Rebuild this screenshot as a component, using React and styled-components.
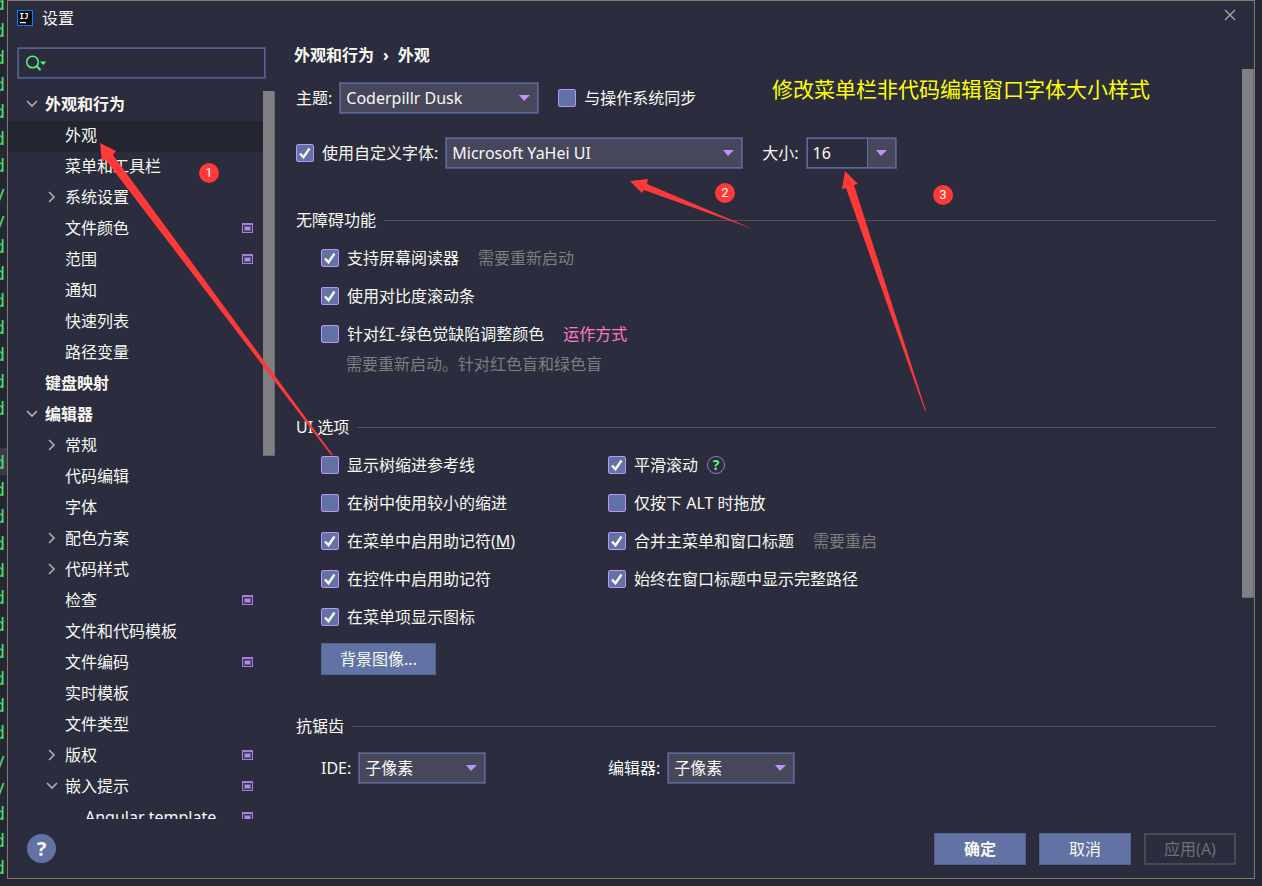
import React, { useState } from "react";
import styled, { createGlobalStyle } from "styled-components";

const GlobalStyle = createGlobalStyle`
  * {
    box-sizing: border-box;
  }
  body {
    margin: 0;
    background: #252735;
  }
  body, button, input, select {
    font-family: "Noto Sans", "Noto Sans CJK SC", sans-serif;
    font-size: 16px;
    line-height: 24px;
    color: #f8f8f2;
  }
`;

const Page = styled.div`
  position: relative;
  display: flex;
  height: 100vh;
  overflow: hidden;
`;

/* editor behind the dialog */
const Gutter = styled.div`
  width: 7px;
  flex-shrink: 0;
  overflow: hidden;
  margin-top: -11px;
`;
const CodeLine = styled.div`
  display: flex;
  justify-content: flex-end;
  height: 27px;
  padding-right: 2px;
  font-family: "DejaVu Sans Mono", monospace;
  font-size: 18px;
  line-height: 29px;
  color: #50fa7b;
  opacity: 0.85;
  background: ${(props) => (props.$current ? "#3d3f50" : "transparent")};
`;

const Dialog = styled.div`
  flex: 1;
  min-width: 0;
  display: flex;
  flex-direction: column;
  margin: 0 7px 7px 0;
  background: #2b2d3e;
  border: 1px solid #837b68;
`;
const TitleBar = styled.header`
  display: flex;
  align-items: center;
  height: 36px;
  padding: 0 18px 2px 9px;
  flex-shrink: 0;
`;
const Title = styled.span`
  flex: 1;
  padding-left: 9px;
`;
const CloseButton = styled.button`
  display: flex;
  padding: 0;
  margin-bottom: 6px;
  border: none;
  background: none;
`;
const Body = styled.div`
  flex: 1;
  min-height: 0;
  display: flex;
`;

const Sidebar = styled.aside`
  width: 267px;
  flex-shrink: 0;
  display: flex;
  flex-direction: column;
  padding-top: 10px;
`;
const Search = styled.label`
  display: flex;
  align-items: center;
  height: 32px;
  margin: 0 9px 11px;
  padding: 0 8px;
  border: 1px solid #465079;
  box-shadow: inset 0 0 0 1px #55618f;
  flex-shrink: 0;
`;
const SearchInput = styled.input`
  flex: 1;
  min-width: 0;
  border: none;
  outline: none;
  background: none;
`;
const TreeArea = styled.div`
  flex: 1;
  min-height: 0;
  display: flex;
`;
const Tree = styled.ul`
  flex: 1;
  margin: 0;
  padding: 0;
  list-style: none;
  overflow: hidden;
`;
const TreeRow = styled.button`
  display: flex;
  align-items: center;
  width: 100%;
  height: 31px;
  padding: 0 10px 3px ${(props) => 16 + props.$level * 20}px;
  border: none;
  text-align: left;
  font-weight: ${(props) => (props.$level === 0 ? 700 : 400)};
  background: ${(props) => (props.$selected ? "#232530" : "none")};
`;
const Arrow = styled.span`
  display: flex;
  width: 21px;
  flex-shrink: 0;
`;
const RowLabel = styled.span`
  flex: 1;
  white-space: nowrap;
`;
const ScrollThumb = styled.div`
  width: 12px;
  height: ${(props) => props.$size};
  flex-shrink: 0;
  margin-top: ${(props) => props.$top};
  background: #808083;
  border: 1px solid #6a6a70;
  border-width: 0 1px 1px 0;
`;

const Content = styled.main`
  flex: 1;
  min-width: 0;
  display: flex;
  flex-direction: column;
  padding-top: 6px;
`;
const Breadcrumb = styled.nav`
  display: flex;
  gap: 9px;
  padding-left: 19px;
  font-weight: 700;
`;
const PaneArea = styled.div`
  flex: 1;
  min-height: 0;
  display: flex;
`;
const Pane = styled.div`
  flex: 1;
  min-width: 0;
  padding: 15px 26px 0 21px;
  overflow: hidden;
`;
const FormRows = styled.div`
  display: flex;
  flex-direction: column;
  gap: 23px;
  margin-bottom: 39px;
`;
const FormRow = styled.div`
  display: flex;
  align-items: center;
  gap: 19px;
  height: 32px;
`;
const Field = styled.label`
  display: flex;
  align-items: center;
  gap: 7px;
  white-space: nowrap;
`;

const SelectBox = styled.span`
  display: grid;
  align-items: center;
  width: ${(props) => props.$width};

  > * {
    grid-area: 1 / 1;
  }
  svg {
    justify-self: end;
    margin-right: 9px;
    pointer-events: none;
  }
`;
const Select = styled.select`
  appearance: none;
  width: 100%;
  height: 32px;
  padding: 0 28px 0 6px;
  border: 1px solid #4b5680;
  border-radius: 0;
  box-shadow: inset 0 0 0 1px #5b6898;
  outline: none;
  background: #46475a;
`;
const Combo = styled.span`
  display: flex;
  width: 91px;
  height: 32px;
  padding: 1px;
  border: 1px solid #4b5680;
  box-shadow: inset 0 0 0 1px #5b6898;
`;
const ComboInput = styled.input`
  flex: 1;
  min-width: 0;
  padding: 0 5px;
  border: none;
  outline: none;
  background: #2b2d3e;
`;
const ComboButton = styled.button`
  display: flex;
  align-items: center;
  justify-content: center;
  width: 28px;
  padding: 0;
  border: none;
  border-left: 1px solid #6474a8;
  background: #46475a;
`;

const CheckLabel = styled.label`
  display: flex;
  align-items: center;
  gap: 8px;
  height: 24px;
  white-space: nowrap;
`;
const Box = styled.span`
  display: grid;

  > * {
    grid-area: 1 / 1;
  }
  svg {
    visibility: hidden;
    pointer-events: none;
  }
  input:checked + svg {
    visibility: visible;
  }
`;
const CheckInput = styled.input`
  appearance: none;
  width: 18px;
  height: 18px;
  margin: 0;
  border: 1px solid #bd93f9;
  border-radius: 2px;
  background: #6272a4;
`;

const Section = styled.section`
  margin-bottom: 39px;
`;
const SectionTitle = styled.h2`
  display: flex;
  align-items: center;
  gap: 8px;
  margin: 0 0 14px;
  font-size: 16px;
  font-weight: 400;

  &::after {
    content: "";
    flex: 1;
    height: 1px;
    background: #515152;
  }
`;
const Columns = styled.div`
  display: grid;
  grid-template-columns: 287px 1fr;
  padding-left: 25px;
`;
const Options = styled.div`
  display: flex;
  flex-direction: column;
  align-items: flex-start;
  gap: 14px;
  padding-left: ${(props) => props.$indent || 0};
`;
const OptionLine = styled.div`
  display: flex;
  align-items: center;
  gap: ${(props) => props.$gap || "19px"};
`;
const Muted = styled.span`
  color: #7d7d7c;
`;
const Hint = styled.p`
  margin: 6px 0 0 50px;
  color: #7d7d7c;
`;
const Link = styled.a`
  color: #ff79c6;
  text-decoration: none;
`;
const HelpMark = styled.button`
  width: 18px;
  height: 18px;
  padding: 0;
  border: 1px solid #9b78cf;
  border-radius: 50%;
  background: none;
  color: #50fa7b;
  font-size: 14px;
  font-weight: 700;
  line-height: 16px;
`;

const Button = styled.button`
  width: ${(props) => props.$width || "92px"};
  height: 32px;
  padding: 0;
  border: 1px solid #56638f;
  background: #6272a4;
  font-weight: ${(props) => (props.$primary ? 700 : 400)};

  &:disabled {
    border: 2px solid #4a4b50;
    background: none;
    color: #6f7073;
  }
`;
const Footer = styled.footer`
  display: flex;
  align-items: center;
  gap: 13px;
  height: 59px;
  padding: 0 18px 0 19px;
  flex-shrink: 0;
`;
const HelpButton = styled.button`
  width: 29px;
  height: 29px;
  margin-right: auto;
  padding: 0;
  border: none;
  border-radius: 50%;
  background: #6272a4;
  font-size: 20px;
  font-weight: 700;
`;

/* annotations drawn over the window */
const Overlay = styled.svg`
  position: absolute;
  top: 0;
  left: 0;
  pointer-events: none;
`;
const Note = styled.div`
  position: absolute;
  top: 73px;
  left: 772px;
  font-size: 21px;
  line-height: 32px;
  color: #ffff00;
  white-space: nowrap;
`;
const Pin = styled.span`
  position: absolute;
  left: ${(props) => props.$x}px;
  top: ${(props) => props.$y}px;
  width: 20px;
  height: 20px;
  border-radius: 50%;
  background: #ff3838;
  color: #fff;
  font-family: Roboto, sans-serif;
  font-size: 13px;
  line-height: 20px;
  text-align: center;
`;

const codeLines = "dddddddyyddddddd dddddddddddyyddd".split("");

const tree = [
  { label: "外观和行为", level: 0, arrow: "down" },
  { label: "外观", level: 1 },
  { label: "菜单和工具栏", level: 1 },
  { label: "系统设置", level: 1, arrow: "right" },
  { label: "文件颜色", level: 1, project: true },
  { label: "范围", level: 1, project: true },
  { label: "通知", level: 1 },
  { label: "快速列表", level: 1 },
  { label: "路径变量", level: 1 },
  { label: "键盘映射", level: 0 },
  { label: "编辑器", level: 0, arrow: "down" },
  { label: "常规", level: 1, arrow: "right" },
  { label: "代码编辑", level: 1 },
  { label: "字体", level: 1 },
  { label: "配色方案", level: 1, arrow: "right" },
  { label: "代码样式", level: 1, arrow: "right" },
  { label: "检查", level: 1, project: true },
  { label: "文件和代码模板", level: 1 },
  { label: "文件编码", level: 1, project: true },
  { label: "实时模板", level: 1 },
  { label: "文件类型", level: 1 },
  { label: "版权", level: 1, arrow: "right", project: true },
  { label: "嵌入提示", level: 1, arrow: "down", project: true },
  { label: "Angular template", level: 2, project: true },
];

const Chevron = ({ dir }) => (
  <svg width="16" height="16" viewBox="0 0 16 16" fill="none" stroke="#adadad" strokeWidth="1.7">
    <path d={dir === "down" ? "M3 5l5 5 5-5" : "M5 3l5 5-5 5"} />
  </svg>
);

const ProjectIcon = () => (
  <svg width="11" height="10" viewBox="0 0 11 10">
    <path fill="#a37fdb" d="M0 0h11v10H0z" />
    <path fill="#3c3852" d="M1 2h9v7H1z" />
    <path fill="#6b5a92" d="M2 3h7v5H2z" />
    <path fill="#b18af0" d="M3 4h5v3H3z" />
  </svg>
);

const Triangle = () => (
  <svg width="12" height="7" viewBox="0 0 12 7">
    <path fill="#bd93f9" d="M1 0h11L6 6z" />
  </svg>
);

const Dropdown = ({ width, value }) => (
  <SelectBox $width={width}>
    <Select defaultValue={value}>
      <option>{value}</option>
    </Select>
    <Triangle />
  </SelectBox>
);

const Check = ({ checked, children }) => (
  <CheckLabel>
    <Box>
      <CheckInput type="checkbox" defaultChecked={checked} />
      <svg width="18" height="18" viewBox="0 0 18 18" fill="none" stroke="#f8f8f2" strokeWidth="2.4">
        <path d="M4 9.5l3.5 3.8L13.5 4.5" />
      </svg>
    </Box>
    <span>{children}</span>
  </CheckLabel>
);

function App() {
  const [selected, setSelected] = useState("外观");

  return (
    <Page>
      <GlobalStyle />
      <Gutter aria-hidden="true">
        {codeLines.map((c, i) => (
          <CodeLine key={i} $current={i === 17}>
            {c}
          </CodeLine>
        ))}
      </Gutter>

      <Dialog role="dialog" aria-label="设置">
        <TitleBar>
          <svg width="16" height="16" viewBox="0 0 16 16">
            <rect width="16" height="16" fill="#087cfa" />
            <rect x="1" y="1" width="14" height="14" fill="#0c0c0e" />
            <path
              d="M3 3.5h3.6M4.8 3.5v5M3 8.5h3.6M8 3.5h3.2M10.2 3.5v3.6q0 1.4-1.4 1.4h-1"
              fill="none"
              stroke="#fff"
              strokeWidth="1.2"
            />
            <path d="M3 12h6v1.2H3z" fill="#fff" />
          </svg>
          <Title>设置</Title>
          <CloseButton aria-label="关闭">
            <svg width="12" height="12" viewBox="0 0 12 12" stroke="#adadad" strokeWidth="1.2">
              <path d="M1 1l10 10M11 1L1 11" />
            </svg>
          </CloseButton>
        </TitleBar>

        <Body>
          <Sidebar>
            <Search>
              <svg width="22" height="18" viewBox="0 0 22 18" fill="none" stroke="#50fa7b" strokeWidth="1.5">
                <circle cx="6.5" cy="8" r="5.8" />
                <path d="M10.5 12l4 4" strokeWidth="2" />
                <path d="M14 7.5h6.4L17.2 11z" fill="#50fa7b" stroke="none" />
              </svg>
              <SearchInput aria-label="搜索" />
            </Search>
            <TreeArea>
              <Tree>
                {tree.map((item) => (
                  <li key={item.label}>
                    <TreeRow
                      $level={item.level}
                      $selected={item.label === selected}
                      onClick={() => setSelected(item.label)}
                    >
                      <Arrow>{item.arrow && <Chevron dir={item.arrow} />}</Arrow>
                      <RowLabel>{item.label}</RowLabel>
                      {item.project && <ProjectIcon />}
                    </TreeRow>
                  </li>
                ))}
              </Tree>
              <ScrollThumb $size="50%" $top="1px" />
            </TreeArea>
          </Sidebar>

          <Content>
            <Breadcrumb>
              <span>外观和行为</span>
              <span>›</span>
              <span>外观</span>
            </Breadcrumb>
            <PaneArea>
              <Pane>
                <FormRows>
                  <FormRow>
                    <Field>
                      主题:
                      <Dropdown width="200px" value="Coderpillr Dusk" />
                    </Field>
                    <Check>与操作系统同步</Check>
                  </FormRow>
                  <FormRow>
                    <OptionLine $gap="7px">
                      <Check checked>使用自定义字体:</Check>
                      <Dropdown width="298px" value="Microsoft YaHei UI" />
                    </OptionLine>
                    <Field>
                      大小:
                      <Combo>
                        <ComboInput defaultValue="16" />
                        <ComboButton aria-label="选择大小">
                          <Triangle />
                        </ComboButton>
                      </Combo>
                    </Field>
                  </FormRow>
                </FormRows>

                <Section>
                  <SectionTitle>无障碍功能</SectionTitle>
                  <Options $indent="25px">
                    <OptionLine>
                      <Check checked>支持屏幕阅读器</Check>
                      <Muted>需要重新启动</Muted>
                    </OptionLine>
                    <Check checked>使用对比度滚动条</Check>
                    <OptionLine>
                      <Check>针对红-绿色觉缺陷调整颜色</Check>
                      <Link href="#how">运作方式</Link>
                    </OptionLine>
                  </Options>
                  <Hint>需要重新启动。针对红色盲和绿色盲</Hint>
                </Section>

                <Section>
                  <SectionTitle>UI 选项</SectionTitle>
                  <Columns>
                    <Options>
                      <Check>显示树缩进参考线</Check>
                      <Check>在树中使用较小的缩进</Check>
                      <Check checked>
                        在菜单中启用助记符(<u>M</u>)
                      </Check>
                      <Check checked>在控件中启用助记符</Check>
                      <Check checked>在菜单项显示图标</Check>
                      <Button $width="115px">背景图像...</Button>
                    </Options>
                    <Options>
                      <OptionLine $gap="9px">
                        <Check checked>平滑滚动</Check>
                        <HelpMark aria-label="帮助">?</HelpMark>
                      </OptionLine>
                      <Check>仅按下 ALT 时拖放</Check>
                      <OptionLine>
                        <Check checked>合并主菜单和窗口标题</Check>
                        <Muted>需要重启</Muted>
                      </OptionLine>
                      <Check checked>始终在窗口标题中显示完整路径</Check>
                    </Options>
                  </Columns>
                </Section>

                <Section>
                  <SectionTitle>抗锯齿</SectionTitle>
                  <Columns>
                    <Field>
                      IDE:
                      <Dropdown width="128px" value="子像素" />
                    </Field>
                    <Field>
                      编辑器:
                      <Dropdown width="128px" value="子像素" />
                    </Field>
                  </Columns>
                </Section>
              </Pane>
              <ScrollThumb $size="529px" $top="2px" />
            </PaneArea>
          </Content>
        </Body>

        <Footer>
          <HelpButton aria-label="帮助">?</HelpButton>
          <Button $primary>确定</Button>
          <Button>取消</Button>
          <Button disabled>应用(A)</Button>
        </Footer>
      </Dialog>

      <Overlay width="1262" height="886" fill="#ff3838">
        <path d="M100 143L116 151 113 155 333 455 331 455 105 159 102 163z" />
        <path d="M630 181L648 179 647 184 753 229 644 190 642 193z" />
        <path d="M845 171L858 184 854 185 926 411 925 411 846 188 842 189z" />
      </Overlay>
      <Note>修改菜单栏非代码编辑窗口字体大小样式</Note>
      <Pin $x={199} $y={163}>1</Pin>
      <Pin $x={715} $y={183}>2</Pin>
      <Pin $x={933} $y={185}>3</Pin>
    </Page>
  );
}

export default App;
